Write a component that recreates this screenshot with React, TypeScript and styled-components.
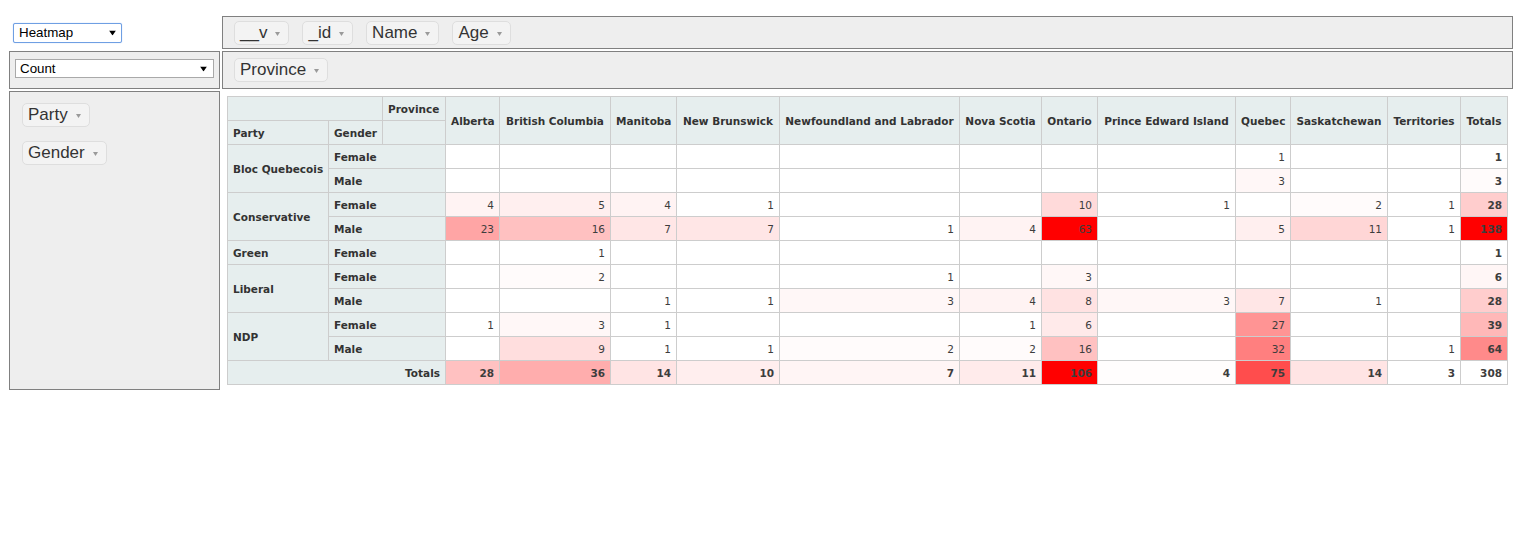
import React from 'react';
import styled, { createGlobalStyle } from 'styled-components';

const GlobalStyle = createGlobalStyle`
  html, body { margin: 0; padding: 0; background: #fff; }
  body { font-family: 'Liberation Sans', Arial, sans-serif; color: #333; }
`;

const Ui = styled.div`
  display: grid;
  grid-template-columns: 211px 1291px;
  grid-template-rows: 33px 38px auto;
  gap: 2px;
  padding: 16px 0 0 9px;
`;

const RendererCell = styled.div`
  display: flex;
  align-items: center;
  padding-left: 4px;
`;

const AxisBox = styled.div<{ $vertical?: boolean }>`
  box-sizing: border-box;
  border: 1px solid #808080;
  background: #eee;
  display: flex;
  flex-direction: ${(p) => (p.$vertical ? 'column' : 'row')};
  align-items: ${(p) => (p.$vertical ? 'flex-start' : 'center')};
  gap: ${(p) => (p.$vertical ? '14px' : '13px')};
  padding: ${(p) => (p.$vertical ? '11px 0 0 12px' : '0 0 0 11px')};
`;

const AggregatorBox = styled.div`
  box-sizing: border-box;
  border: 1px solid #808080;
  background: #eee;
  display: flex;
  align-items: flex-start;
  padding: 7px 5px 0;
`;

const SelectWrap = styled.div<{ $w: string; $h: number }>`
  position: relative;
  width: ${(p) => p.$w};
  height: ${(p) => p.$h}px;
`;

const Select = styled.select<{ $focus?: boolean }>`
  appearance: none;
  -webkit-appearance: none;
  box-sizing: border-box;
  width: 100%;
  height: 100%;
  margin: 0;
  padding: 0 0 0 ${(p) => (p.$focus ? 5 : 4)}px;
  border: 1px solid ${(p) => (p.$focus ? '#6f9fe3' : '#a9a9a9')};
  border-radius: ${(p) => (p.$focus ? 2 : 0)}px;
  box-shadow: ${(p) => (p.$focus ? '0 0 1px rgba(80,140,230,0.6)' : 'none')};
  background: #fff;
  color: #000;
  font-family: 'Liberation Sans', Arial, sans-serif;
  font-size: 13.33px;
  outline: none;
`;

const SelectArrow = styled.svg<{ $right: number }>`
  position: absolute;
  right: ${(p) => p.$right}px;
  top: 50%;
  transform: translateY(-50%);
  pointer-events: none;
`;

const Chip = styled.span`
  display: inline-flex;
  align-items: center;
  gap: 8px;
  box-sizing: border-box;
  height: 24px;
  padding: 0 8px 0 5px;
  background: #f3f3f3;
  border: 1px solid #dedede;
  border-radius: 5px;
  font-size: 17px;
  color: #333;
  white-space: nowrap;
`;

const Triangle = styled.svg`
  flex: none;
  margin-top: 2px;
`;

const RendererArea = styled.div`
  padding: 5px;
`;

const PivotTable = styled.table`
  border-collapse: collapse;
  table-layout: fixed;
  width: 1281px;
  font-family: 'DejaVu Sans', Verdana, sans-serif;
  font-size: 10.5px;
  line-height: 13px;
  text-align: left;
`;

const Col = styled.col<{ $w: number }>`
  width: ${(p) => p.$w}px;
`;

const HeadCell = styled.th<{ $align?: 'left' | 'center' | 'right' }>`
  background: #e6eeee;
  border: 1px solid #cdcdcd;
  padding: 6px 5px 4px;
  font-weight: bold;
  color: #333;
  white-space: nowrap;
  overflow: visible;
  vertical-align: middle;
  text-align: ${(p) => p.$align ?? 'left'};
`;

const ValueCell = styled.td<{ $bold?: boolean }>`
  background: #fff;
  border: 1px solid #cdcdcd;
  padding: 6px 5px 4px;
  color: #3d3d3d;
  text-align: right;
  vertical-align: top;
  white-space: nowrap;
  font-weight: ${(p) => (p.$bold ? 'bold' : 'normal')};
`;

type Cell = number | null;

const provinces = [
  'Alberta',
  'British Columbia',
  'Manitoba',
  'New Brunswick',
  'Newfoundland and Labrador',
  'Nova Scotia',
  'Ontario',
  'Prince Edward Island',
  'Quebec',
  'Saskatchewan',
  'Territories',
];

const _ = null;

const data: { party: string; rows: { gender: string; values: Cell[] }[] }[] = [
  {
    party: 'Bloc Quebecois',
    rows: [
      { gender: 'Female', values: [_, _, _, _, _, _, _, _, 1, _, _] },
      { gender: 'Male', values: [_, _, _, _, _, _, _, _, 3, _, _] },
    ],
  },
  {
    party: 'Conservative',
    rows: [
      { gender: 'Female', values: [4, 5, 4, 1, _, _, 10, 1, _, 2, 1] },
      { gender: 'Male', values: [23, 16, 7, 7, 1, 4, 63, _, 5, 11, 1] },
    ],
  },
  {
    party: 'Green',
    rows: [{ gender: 'Female', values: [_, 1, _, _, _, _, _, _, _, _, _] }],
  },
  {
    party: 'Liberal',
    rows: [
      { gender: 'Female', values: [_, 2, _, _, 1, _, 3, _, _, _, _] },
      { gender: 'Male', values: [_, _, 1, 1, 3, 4, 8, 3, 7, 1, _] },
    ],
  },
  {
    party: 'NDP',
    rows: [
      { gender: 'Female', values: [1, 3, 1, _, _, 1, 6, _, 27, _, _] },
      { gender: 'Male', values: [_, 9, 1, 1, 2, 2, 16, _, 32, _, 1] },
    ],
  },
];

const colWidths = [101, 54, 63, 54, 111, 66, 103, 180, 82, 56, 138, 55, 97, 73, 47];

const scale = (vals: number[]) => {
  const min = Math.min(...vals);
  const max = Math.max(...vals);
  return (x: number) => {
    const nonRed = 255 - Math.round((255 * (x - min)) / (max - min));
    return `rgb(255,${nonRed},${nonRed})`;
  };
};

const allRows = data.flatMap((d) => d.rows.map((r) => r.values));
const dataVals = allRows.flat().filter((v): v is number => v !== null);
const rowTotals = allRows.map((r) => r.reduce<number>((s, v) => s + (v ?? 0), 0));
const colTotals = provinces.map((_p, i) => allRows.reduce<number>((s, r) => s + (r[i] ?? 0), 0));
const grandTotal = rowTotals.reduce((a, b) => a + b, 0);

const dataColor = scale(dataVals);
const rowTotalColor = scale(rowTotals);
const colTotalColor = scale(colTotals);

const DropArrow = ({ right }: { right: number }) => (
  <SelectArrow $right={right} width="7" height="5" viewBox="0 0 7 5">
    <path d="M0 0 H7 L3.5 5 Z" fill="#000" />
  </SelectArrow>
);

const Attr = ({ name }: { name: string }) => (
  <Chip>
    {name}
    <Triangle width="5" height="4" viewBox="0 0 5 4">
      <path d="M0 0 H5 L2.5 4 Z" fill="#9a9a9a" />
    </Triangle>
  </Chip>
);

export default function App() {
  let rowIndex = 0;
  return (
    <>
      <GlobalStyle />
      <Ui>
        <RendererCell>
          <SelectWrap $w="109px" $h={20}>
            <Select $focus defaultValue="Heatmap">
              <option>Table</option>
              <option>Table Barchart</option>
              <option>Heatmap</option>
              <option>Row Heatmap</option>
              <option>Col Heatmap</option>
            </Select>
            <DropArrow right={6} />
          </SelectWrap>
        </RendererCell>
        <AxisBox>
          <Attr name="__v" />
          <Attr name="_id" />
          <Attr name="Name" />
          <Attr name="Age" />
        </AxisBox>
        <AggregatorBox>
          <SelectWrap $w="100%" $h={19}>
            <Select defaultValue="Count">
              <option>Count</option>
              <option>Count Unique Values</option>
              <option>Sum</option>
              <option>Average</option>
            </Select>
            <DropArrow right={7} />
          </SelectWrap>
        </AggregatorBox>
        <AxisBox>
          <Attr name="Province" />
        </AxisBox>
        <AxisBox $vertical>
          <Attr name="Party" />
          <Attr name="Gender" />
        </AxisBox>
        <RendererArea>
          <PivotTable>
            <colgroup>
              {colWidths.map((w, i) => (
                <Col key={i} $w={w} />
              ))}
            </colgroup>
            <thead>
              <tr>
                <HeadCell colSpan={2} />
                <HeadCell>Province</HeadCell>
                {provinces.map((p) => (
                  <HeadCell key={p} rowSpan={2} $align="center">
                    {p}
                  </HeadCell>
                ))}
                <HeadCell rowSpan={2} $align="center">
                  Totals
                </HeadCell>
              </tr>
              <tr>
                <HeadCell>Party</HeadCell>
                <HeadCell>Gender</HeadCell>
                <HeadCell />
              </tr>
            </thead>
            <tbody>
              {data.map((group) =>
                group.rows.map((row, gi) => {
                  const total = rowTotals[rowIndex];
                  rowIndex += 1;
                  return (
                    <tr key={group.party + row.gender}>
                      {gi === 0 && <HeadCell rowSpan={group.rows.length}>{group.party}</HeadCell>}
                      <HeadCell colSpan={2}>{row.gender}</HeadCell>
                      {row.values.map((v, i) => (
                        <ValueCell
                          key={i}
                          style={v !== null ? { backgroundColor: dataColor(v) } : undefined}
                        >
                          {v ?? ''}
                        </ValueCell>
                      ))}
                      <ValueCell $bold style={{ backgroundColor: rowTotalColor(total) }}>
                        {total}
                      </ValueCell>
                    </tr>
                  );
                }),
              )}
              <tr>
                <HeadCell colSpan={3} $align="right">
                  Totals
                </HeadCell>
                {colTotals.map((t, i) => (
                  <ValueCell key={i} $bold style={{ backgroundColor: colTotalColor(t) }}>
                    {t}
                  </ValueCell>
                ))}
                <ValueCell $bold>{grandTotal}</ValueCell>
              </tr>
            </tbody>
          </PivotTable>
        </RendererArea>
      </Ui>
    </>
  );
}
